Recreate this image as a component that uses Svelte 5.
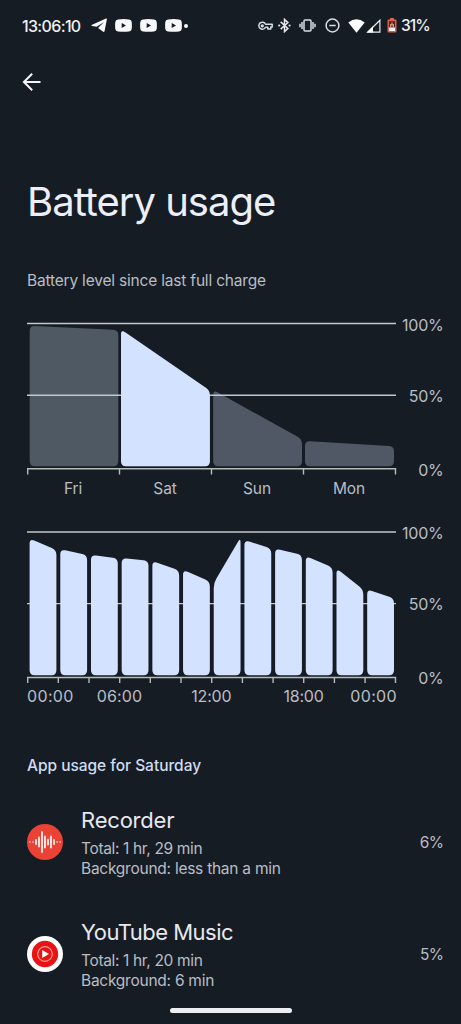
<script>
  // Each bar is a quadrilateral: [left, right, top-left y, top-right y]
  const days = [
    { name: 'Fri', bar: [2.7, 91.3, 15.7, 20] },
    { name: 'Sat', bar: [94, 182.9, 19.4, 80.5], selected: true },
    { name: 'Sun', bar: [186.2, 275, 79.8, 129.3] },
    { name: 'Mon', bar: [278, 367, 131, 136.4] }
  ];
  const hourTops = [
    [18.5, 30], [29.3, 35], [35, 38.3], [38, 40.7], [41, 50.5], [49.8, 61.5],
    [63, 17.5], [20, 28.5], [28.6, 35], [36, 47.5], [48.5, 69.5], [69.3, 78.3]
  ];
  const hours = hourTops.map(([a, b], i) => [2.6 + i * 30.69, 29.4 + i * 30.69, a, b]);
  const apps = [
    { name: 'Recorder', total: 'Total: 1 hr, 29 min', background: 'Background: less than a min', share: '6%', icon: 'recorder' },
    { name: 'YouTube Music', total: 'Total: 1 hr, 20 min', background: 'Background: 6 min', share: '5%', icon: 'music' }
  ];
  // Recorder waveform: [x, bar height]
  const wave = [
    [9, 4], [12, 9], [15, 20], [18, 11], [21, 5], [24, 11], [27, 4]
  ];

  function shape([l, r, a, b], bottom, radius = 5) {
    const pts = [[l, a], [r, b], [r, bottom], [l, bottom]];
    return pts.map((p, i) => {
      const prev = pts[(i + 3) % 4];
      const next = pts[(i + 1) % 4];
      const toward = (q) => {
        const d = Math.hypot(q[0] - p[0], q[1] - p[1]);
        const k = Math.min(radius, d / 2) / d;
        return [p[0] + (q[0] - p[0]) * k, p[1] + (q[1] - p[1]) * k].map((n) => n.toFixed(2)).join(' ');
      };
      return `${i ? 'L' : 'M'}${toward(prev)}Q${p[0]} ${p[1]} ${toward(next)}`;
    }).join('') + 'Z';
  }
</script>

{#snippet youtube()}
  <svg width="17" height="13" viewBox="0 0 17 13">
    <path fill="#f6f8fb" fill-rule="evenodd" d="M3 .4Q8.500-.2 14 .4Q16.500.7 16.700 3Q17.100 6.500 16.700 10Q16.400 12.200 14 12.500Q8.500 13 3 12.500Q.6 12.200.300 10Q-.1 6.500.300 3Q.6.7 3 .4ZM6.700 4V9L11 6.500Z" />
  </svg>
{/snippet}

<div class="screen">
  <header class="status">
    <span class="clock">13:06:10</span>
    <div class="notices">
      <svg class="plane" width="16" height="15" viewBox="0 0 16 15"><path fill="#f6f8fb" d="M.5 6.900L15 .5Q16.100.1 15.900 1.300L13.600 12.900Q13.200 14.500 11.800 13.600L7.700 10.500Q7 9.900 7.700 9.200L12.900 4.200L5.600 8.700L1 7.900Q-.1 7.500.5 6.900Z" /></svg>
      {@render youtube()}
      {@render youtube()}
      {@render youtube()}
      <i class="more"></i>
    </div>
    <div class="system">
      <svg class="key" width="15" height="10" viewBox="0 0 15 10" fill="none" stroke="#d9dde3" stroke-width="1.500"><path d="M7.500 3.200H14.200V6H12.800V8H9.800V6.200H7.500A3.500 3.500 0 1 1 7.500 3.200Z" stroke-linejoin="round" /><circle cx="4.300" cy="4.800" r=".9" /></svg>
      <svg class="bluetooth" width="13" height="15" viewBox="0 0 13 15" fill="none" stroke="#e5e8ed" stroke-width="1.500"><path d="M2.700 3.900L9.900 10.400L6.500 13.600V1.400L9.900 4.600L2.700 11.100" /><g fill="#e5e8ed" stroke="none"><circle cx="1.200" cy="7.500" r="1.100" /><circle cx="11.600" cy="7.500" r="1.100" /></g></svg>
      <svg class="vibrate" width="17" height="13" viewBox="0 0 17 13" fill="none" stroke="#d9dde3" stroke-width="1.500"><rect x="5" y=".9" width="7" height="11.200" rx="1" /><path d="M3 3V10M1 4.700V8.300M14 3V10M16 4.700V8.300" /></svg>
      <svg class="dnd" width="15" height="15" viewBox="0 0 15 15" fill="none" stroke="#d9dde3" stroke-width="1.500"><circle cx="7.500" cy="7.500" r="6.400" /><path d="M4.300 7.500H10.700" /></svg>
      <svg class="wifi" width="17" height="14" viewBox="0 0 17 14"><path fill="#fafbfd" d="M.3 3.600Q8.500-3 16.700 3.600L8.500 13.800Z" /></svg>
      <svg class="signal" width="15" height="14" viewBox="0 0 15 14"><path d="M1.700 13.200H13.900V1.200Z" fill="none" stroke="#e9ecf1" stroke-width="1.200" /><path d="M.8 13.600L7 7.300V13.600Z" fill="#fff" /></svg>
      <svg class="cell" width="10" height="15" viewBox="0 0 10 15"><path fill="#d9634d" d="M3 0H7V1.500H8.500Q9.500 1.500 9.500 2.500V13.500Q9.500 14.500 8.500 14.500H1.500Q.5 14.500.5 13.500V2.500Q.5 1.500 1.500 1.500H3Z" /><path fill="#4c2523" d="M2 3.200H8V9H2Z" /><path fill="#fff" d="M2 9.700H8V13H2Z" /><path fill="#e08a72" d="M4.300 4.500H5.700V6H7V9H5.700V7.400H4.300V9H3V6H4.300Z" /></svg>
      <span class="charge">31%</span>
    </div>
  </header>

  <nav>
    <svg width="20" height="20" viewBox="0 0 20 20" fill="none" stroke="#f2f4f8" stroke-width="2"><path d="M18.500 10H2.200M10.200 1.700L1.900 10L10.200 18.300" /></svg>
  </nav>

  <h1>Battery usage</h1>
  <p class="caption">Battery level since last full charge</p>

  <section class="chart daily">
    <div class="plot">
      <svg width="370" height="166" viewBox="0 0 370 166">
        {#each days as day}
          <path d={shape(day.bar, 156.3)} fill={day.name === 'Fri' ? '#4f5963' : '#505866'} />
        {/each}
        <path class="grid" d="M0 13.500H369M0 85.200H369" />
        <path d={shape(days[1].bar, 156.3)} fill="#d3e2ff" />
        <path class="axis" d="M.7 164.500V158.800H368.500V164.500M92.500 158.800V164.500M184.500 158.800V164.500M276.500 158.800V164.500" />
      </svg>
      <div class="days">{#each days as day}<span>{day.name}</span>{/each}</div>
    </div>
    <div class="scale"><span>100%</span><span>50%</span><span>0%</span></div>
  </section>

  <section class="chart hourly">
    <div class="plot">
      <svg width="370" height="166" viewBox="0 0 370 166">
        <path class="grid" d="M0 12H369M0 83.600H369" />
        {#each hours as bar}
          <path d={shape(bar, 155.300)} fill="#d3e2ff" />
        {/each}
        <path class="axis" d="M.7 163V157.500H368.500V163" />
        {#each hours.slice(1) as _, i}
          <path class="axis" d={`M${(31.3 + i * 30.68).toFixed(1)} 157.500V163`} />
        {/each}
      </svg>
      <div class="hours"><span>00:00</span><span>06:00</span><span>12:00</span><span>18:00</span><span>00:00</span></div>
    </div>
    <div class="scale"><span>100%</span><span>50%</span><span>0%</span></div>
  </section>

  <h2>App usage for Saturday</h2>

  <main>
    {#each apps as app}
      <article class={app.icon}>
        {#if app.icon === 'recorder'}
          <svg width="36" height="36" viewBox="0 0 36 36">
            <circle cx="18" cy="18" r="18" fill="#ea4335" />
            <g stroke="#fde0da" stroke-width="2" stroke-linecap="round">
              {#each wave as [x, h]}<path d={`M${x} ${18 - h / 2}V${18 + h / 2}`} />{/each}
              <path stroke-width="1.500" d="M2.800 18H3M5.700 18H6M30 18H30.300M33 18H33.200" />
            </g>
          </svg>
        {:else}
          <svg width="36" height="36" viewBox="0 0 36 36">
            <circle cx="18" cy="18" r="18" fill="#fff" />
            <circle cx="18" cy="18" r="13.200" fill="#e91313" />
            <circle cx="18" cy="18" r="7.300" fill="none" stroke="#ff9f94" stroke-width="1.200" />
            <path d="M15.200 14V22L22 18Z" fill="#fff" />
          </svg>
        {/if}
        <div class="detail">
          <h3>{app.name}</h3>
          <p class="total">{app.total}</p>
          <p>{app.background}</p>
        </div>
        <span class="share">{app.share}</span>
      </article>
    {/each}
  </main>
  <footer><i></i></footer>
</div>

<style>
  :global(body) { margin: 0; background: #161c24; }
  .screen {
    box-sizing: border-box;
    width: 461px;
    height: 1024px;
    overflow: hidden;
    display: flex;
    flex-direction: column;
    background: #161c24;
    color: #b9bdc5;
    font-family: Inter, Roboto, sans-serif;
    white-space: nowrap;
  }
  svg { display: block; flex: none; }
  h1, h2, h3, p { margin: 0; font-weight: 400; }
  .status { height: 51px; display: flex; align-items: center; padding-left: 22px; color: #eef0f4; font-size: 16px; font-weight: 500; }
  .clock { width: 69px; letter-spacing: -0.650px; }
  .notices { display: flex; align-items: center; gap: 8px; width: 167px; }
  .more { width: 4px; height: 4px; margin-left: -6px; border-radius: 50%; background: #f6f8fb; }
  .system { display: flex; align-items: center; }
  .bluetooth { margin-left: 5px; }
  .vibrate { margin-left: 8px; }
  .dnd { margin-left: 9px; }
  .wifi { margin-left: 8px; }
  .signal { margin-left: 1px; }
  .cell { margin-left: 6px; }
  .charge { margin-left: 4px; font-size: 15.500px; letter-spacing: -1px; }
  nav { height: 61px; padding: 21px 0 0 22px; box-sizing: border-box; }
  h1 { height: 50px; margin: 65px 0 0 27px; font-size: 40px; line-height: 50px; letter-spacing: -1px; color: #eceffa; }
  .caption { height: 20px; margin: 44px 0 0 27px; font-size: 15.500px; line-height: 20px; letter-spacing: -0.190px; }
  .chart { display: flex; margin-left: 27px; }
  .daily { margin-top: 19px; height: 210px; }
  .hourly { height: 210px; }
  .plot { width: 370px; }
  .grid { stroke: #c3c8cd; stroke-width: 1.400; fill: none; }
  .axis { stroke: #b5bdba; stroke-width: 1.400; fill: none; }
  .days { display: grid; grid-template-columns: repeat(4, 92px); text-align: center; font-size: 15.500px; line-height: 20px; margin-top: 3px; letter-spacing: -0.100px; }
  .hours { display: flex; width: 370px; font-size: 16px; line-height: 20px; letter-spacing: 0.350px; }
  .hours span:nth-child(2) { margin-left: 23px; letter-spacing: 0.150px; }
  .hours span:nth-child(3) { margin-left: 49px; letter-spacing: -0.200px; }
  .hours span:nth-child(4) { margin-left: 52px; letter-spacing: -0.200px; }
  .hours span:nth-child(5) { margin-left: auto; }
  .scale { width: 46.500px; height: 165px; padding-top: 5px; display: flex; flex-direction: column; align-items: flex-end; gap: 51px; font-size: 16px; line-height: 20px; letter-spacing: -0.250px; }
  .scale span:last-child { margin-top: 3px; }
  .hourly .scale { padding-top: 3px; }
  h2 { height: 20px; margin: 26px 0 0 27px; font-size: 15.500px; line-height: 20px; font-weight: 500; letter-spacing: -0.030px; color: #d0dcf2; }
  main { margin: 30px 17.500px 0 27px; }
  article { display: flex; align-items: center; height: 72px; margin-bottom: 40px; }
  .detail { margin-left: 18px; flex: 1; }
  h3 { font-size: 22px; line-height: 28px; letter-spacing: -0.200px; color: #e6e8ee; margin-bottom: 5px; margin-top: 1px; }
  .music h3 { letter-spacing: -0.520px; }
  .detail p { font-size: 15.500px; line-height: 20px; letter-spacing: -0.250px; }
  .detail .total { letter-spacing: -0.350px; }
  .share { font-size: 15.500px; letter-spacing: -0.600px; }
  footer { display: flex; justify-content: center; margin-top: -22px; }
  footer i { width: 122px; height: 5px; border-radius: 3px; background: #eceef2; }
</style>
